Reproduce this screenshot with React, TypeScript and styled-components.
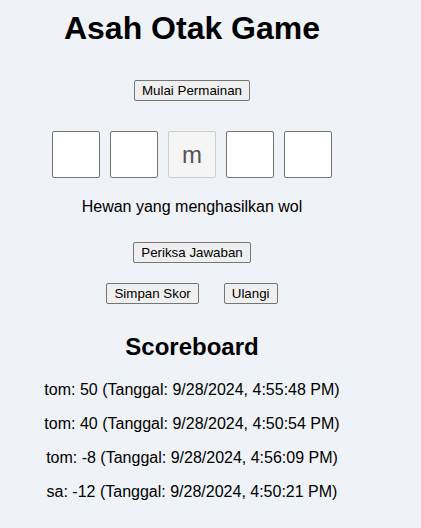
import React from 'react';
import styled, { createGlobalStyle } from 'styled-components';

const GlobalStyle = createGlobalStyle`
  body {
    margin: 0;
    background: #eff2f7;
    font-family: "Liberation Sans", Arial, sans-serif;
    color: #000;
  }
`;

const GameLayout = styled.div`
  width: 384px;
  display: flex;
  flex-direction: column;
  align-items: center;
  text-align: center;
`;

const Title = styled.h1`
  margin: 10px 0 0;
  font-size: 32px;
  line-height: 37px;
  font-weight: bold;
`;

const Button = styled.button<{ $top?: number }>`
  margin-top: ${({ $top }) => $top ?? 0}px;
  padding: 1px 7px;
  height: 21px;
  font-family: "Liberation Sans", Arial, sans-serif;
  font-size: 13.33px;
  color: #000;
  background: #efefef;
  border: 1px solid #767676;
  border-radius: 2px;
`;

const LetterRow = styled.div`
  display: flex;
  gap: 10px;
  margin-top: 30px;
`;

const LetterBox = styled.input`
  box-sizing: border-box;
  width: 48px;
  height: 47px;
  padding: 0;
  text-align: center;
  font-family: "Liberation Sans", Arial, sans-serif;
  font-size: 24px;
  color: #000;
  background: #fff;
  border: 1px solid #767676;
  border-radius: 2px;

  &:disabled {
    color: #545454;
    background: #f5f5f5;
    border-color: #cfcfcf;
  }
`;

const Hint = styled.p`
  margin: 20px 0 0;
  font-size: 16px;
  line-height: 18px;
`;

const ButtonRow = styled.div`
  display: flex;
  gap: 25px;
  margin-top: 20px;
`;

const SubTitle = styled.h2`
  margin: 29px 0 0;
  font-size: 24px;
  line-height: 28px;
  font-weight: bold;
`;

const ScoreList = styled.ul`
  list-style: none;
  margin: 20px 0 0;
  padding: 0;
  display: flex;
  flex-direction: column;
  gap: 16px;
`;

const ScoreItem = styled.li`
  font-size: 16px;
  line-height: 18px;
`;

const letters = ['', '', 'm', '', ''];

const scores = [
  { name: 'tom', score: 50, date: '9/28/2024, 4:55:48 PM' },
  { name: 'tom', score: 40, date: '9/28/2024, 4:50:54 PM' },
  { name: 'tom', score: -8, date: '9/28/2024, 4:56:09 PM' },
  { name: 'sa', score: -12, date: '9/28/2024, 4:50:21 PM' },
];

export default function App() {
  return (
    <>
      <GlobalStyle />
      <GameLayout>
        <Title>Asah Otak Game</Title>
        <Button $top={33}>Mulai Permainan</Button>
        <LetterRow>
          {letters.map((letter, i) => (
            <LetterBox
              key={i}
              maxLength={1}
              defaultValue={letter}
              disabled={letter !== ''}
            />
          ))}
        </LetterRow>
        <Hint>Hewan yang menghasilkan wol</Hint>
        <Button $top={26}>Periksa Jawaban</Button>
        <ButtonRow>
          <Button>Simpan Skor</Button>
          <Button>Ulangi</Button>
        </ButtonRow>
        <SubTitle>Scoreboard</SubTitle>
        <ScoreList>
          {scores.map((s, i) => (
            <ScoreItem key={i}>
              {s.name}: {s.score} (Tanggal: {s.date})
            </ScoreItem>
          ))}
        </ScoreList>
      </GameLayout>
    </>
  );
}
